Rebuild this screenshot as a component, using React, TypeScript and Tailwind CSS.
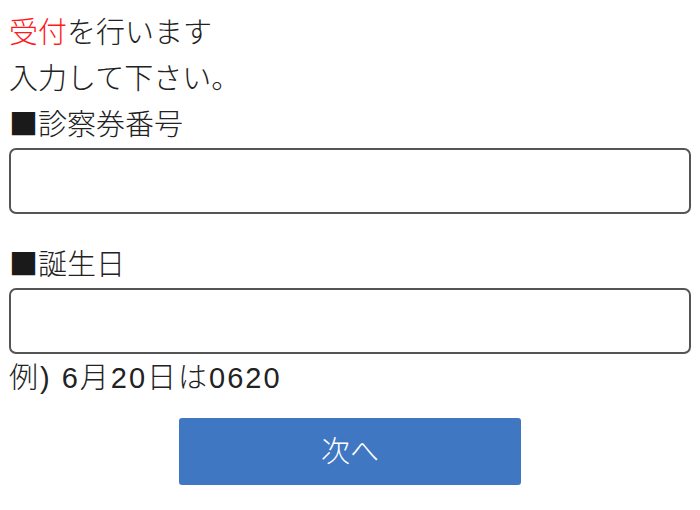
import React from 'react';

const Square: React.FC = () => (
  <span className="font-normal leading-[0] text-[#1a1a1a]" style={{ fontFamily: '"Noto Sans CJK JP", sans-serif' }}>
    ■
  </span>
);

const App: React.FC = () => {
  return (
    <div
      className="w-[700px] min-h-[510px] bg-white px-[9px] pt-[10px] text-[29px] leading-[46px] text-[#222222] font-light"
      style={{ fontFamily: '"Liberation Sans", "Noto Sans CJK JP", sans-serif' }}
    >
      <p>
        <span className="text-[#ff1a1a]">受付</span>を行います
      </p>
      <p>入力して下さい。</p>

      {/* 診察券番号 */}
      <p>
        <Square />診察券番号
      </p>
      <input
        type="text"
        className="block w-full h-[66px] rounded-[7px] border-2 border-[#555555] bg-white px-3 outline-none"
      />

      {/* 誕生日 */}
      <p className="mt-[28px]">
        <Square />誕生日
      </p>
      <input
        type="text"
        className="block w-full h-[66px] rounded-[7px] border-2 border-[#555555] bg-white px-3 outline-none"
      />
      <p className="mt-[1px] tracking-[2px]">例) 6月20日は0620</p>

      <div className="flex justify-center mt-[17px]">
        <button className="w-[342px] h-[67px] rounded-[3px] bg-[#3f77c3] text-white text-[29px] font-light">
          次へ
        </button>
      </div>
    </div>
  );
};

export default App;
